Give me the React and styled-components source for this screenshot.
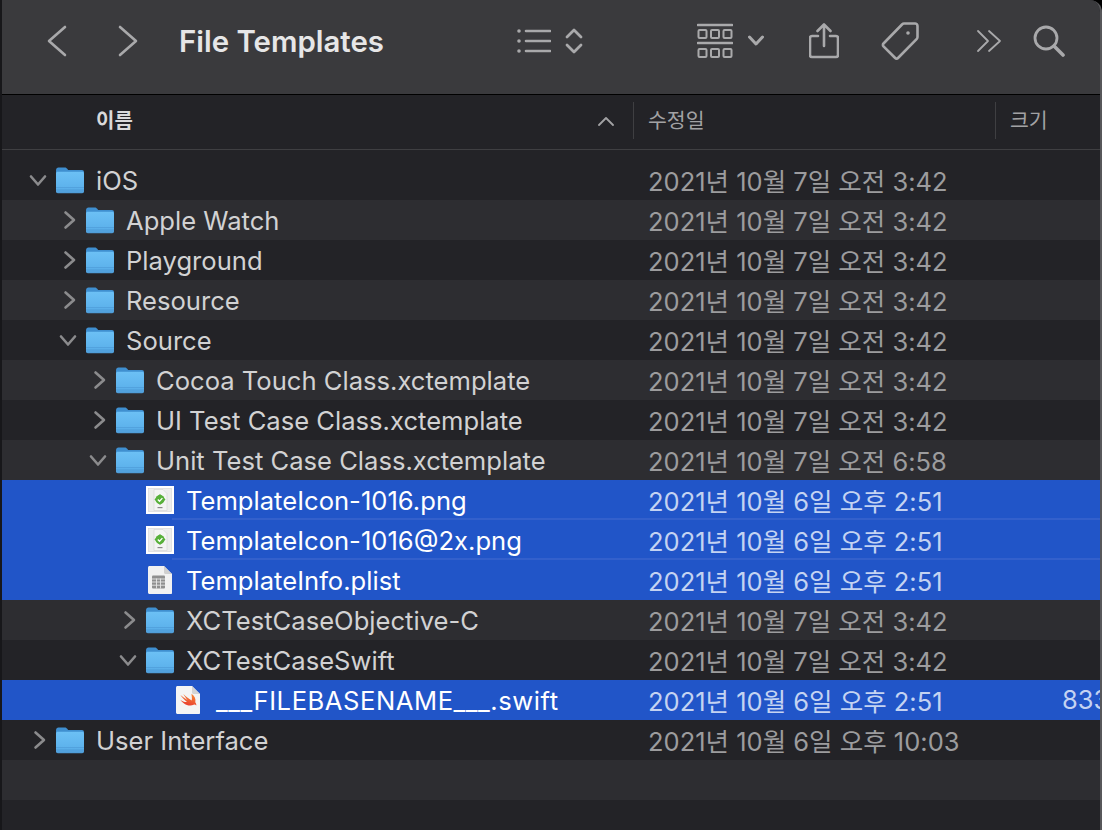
import React from 'react';
import styled, { createGlobalStyle } from 'styled-components';

const SANS = `Inter, "Noto Sans CJK KR", sans-serif`;

const GlobalStyle = createGlobalStyle`
  html, body {
    margin: 0;
    padding: 0;
    background: #000;
    overflow: hidden;
  }
`;

const Window = styled.div`
  width: 1102px;
  height: 830px;
  box-sizing: border-box;
  display: flex;
  flex-direction: column;
  overflow: hidden;
  background: #232327;
  border-left: 2px solid #17171a;
  border-right: 2px solid #57575a;
  border-top-right-radius: 12px;
  font-family: ${SANS};
`;

const Toolbar = styled.header`
  height: 95px;
  flex: none;
  box-sizing: border-box;
  display: flex;
  align-items: center;
  padding: 0 0 12px 45px;
  background: #3a3a3d;
  border-bottom: 1px solid #000;
`;

const ToolIcon = styled.svg`
  flex: none;
  margin-left: ${(p) => p.$left || 0}px;
  fill: none;
  stroke: #a9a9ab;
  stroke-width: 2.6;
  stroke-linecap: round;
  stroke-linejoin: round;
`;

const Title = styled.h1`
  margin: 0 0 0 41px;
  width: 204px;
  flex: none;
  font-size: 29.4px;
  font-weight: 600;
  color: #e6e6e7;
  white-space: nowrap;
`;

const ColumnHeader = styled.div`
  height: 55px;
  flex: none;
  box-sizing: border-box;
  padding-top: 7px;
  display: grid;
  grid-template-columns: 631px 362px 1fr;
  align-items: start;
  background: #232327;
  border-bottom: 1px solid #3f3f42;
`;

const HeaderCell = styled.div`
  height: 37px;
  display: flex;
  align-items: center;
  justify-content: space-between;
  box-sizing: border-box;
  padding: 0 19px 3px ${(p) => p.$left}px;
  border-left: ${(p) => (p.$divider ? '1px solid #3f3f42' : 'none')};
  font-size: ${(p) => (p.$active ? 20 : 20.5)}px;
  font-weight: ${(p) => (p.$active ? 600 : 400)};
  color: ${(p) => (p.$active ? '#d9d9da' : '#a2a2a4')};
`;

const SortCaret = styled.svg`
  margin-top: 3px;
  fill: none;
  stroke: #a2a2a4;
  stroke-width: 1.8;
  stroke-linecap: round;
  stroke-linejoin: round;
`;

const List = styled.div`
  flex: 1;
  padding-top: 10px;
  overflow: hidden;
`;

const Row = styled.div`
  position: relative;
  height: 40px;
  display: grid;
  grid-template-columns: 631px 362px 1fr;
  align-items: center;
  white-space: nowrap;
  overflow: hidden;
  background: ${(p) => (p.$selected ? '#2155c8' : p.$odd ? '#2d2d31' : '#232327')};

  &::after {
    content: '';
    display: ${(p) => (p.$line ? 'block' : 'none')};
    position: absolute;
    left: 170px;
    right: 0;
    bottom: 0;
    height: 2px;
    background: #3360cc;
  }
`;

const NameCell = styled.div`
  display: flex;
  align-items: center;
  padding-left: ${(p) => 26 + p.$level * 30}px;
  font-size: 25.6px;
  color: ${(p) => (p.$selected ? '#ffffff' : '#d2d2d3')};
`;

const Disclosure = styled.svg`
  width: 20px;
  height: 20px;
  flex: none;
  margin-right: 8px;
  fill: none;
  stroke: #8b8b8d;
  stroke-width: 2.6;
  stroke-linecap: round;
  stroke-linejoin: round;
`;

const FileName = styled.span`
  margin-left: 12px;
  letter-spacing: ${(p) => (p.$wide ? '0.55px' : 'normal')};
`;

const DateCell = styled.div`
  padding: 0 0 2px 15px;
  font-size: 25.5px;
  color: ${(p) => (p.$selected ? '#c4d3f2' : '#9c9c9e')};
`;

const SizeCell = styled.div`
  padding: 0 0 2px 67px;
  font-size: 25.5px;
  color: #c4d3f2;
`;

function Chevron({ open }) {
  return (
    <Disclosure viewBox="0 0 20 20">
      {open ? <path d="M3 6.500l7 8 7-8" /> : <path d="M7.500 2.500l8.500 7.500-8.500 7.500" />}
    </Disclosure>
  );
}

function FolderIcon() {
  return (
    <svg width="28" height="28" viewBox="0 0 28 28" style={{ flex: 'none' }}>
      <defs>
        <linearGradient id="folderBody" x1="0" y1="0" x2="0" y2="1">
          <stop offset="0" stopColor="#6cc0f5" />
          <stop offset="0.75" stopColor="#5db2ec" />
          <stop offset="1" stopColor="#4d9ad6" />
        </linearGradient>
      </defs>
      <path d="M0 4.500C0 2.800 1 1.500 2.500 1.500h6.300c1 0 1.600.4 2.200 1.100L12.200 4H26c1.200 0 2 .8 2 2v2H0z" fill="#3f8fd0" />
      <path d="M0 7.500C0 6.400.8 5.800 2 5.800h24c1.200 0 2 .6 2 1.700V25.500c0 1-.8 1.700-1.800 1.700H1.800C.8 27.200 0 26.500 0 25.500z" fill="url(#folderBody)" />
      <path d="M0 21.500h28M0 24h28" stroke="#4a97d4" strokeWidth="0.8" opacity="0.7" />
    </svg>
  );
}

function ThumbIcon() {
  return (
    <svg width="28" height="28" viewBox="0 0 28 28" style={{ flex: 'none' }}>
      <rect width="28" height="28" fill="#fff" />
      <rect x="2.500" y="2.500" width="23" height="23" fill="#ededed" stroke="#d6d6d6" strokeWidth="0.6" />
      <path d="M8 3.500h9l4 4v17H8z" fill="#f4f4f4" stroke="#d4d4d4" strokeWidth="0.6" />
      <path d="M14 8l5.500 5.500-5.500 5.500-5.500-5.500z" fill="#4fae35" />
      <circle cx="14" cy="13.500" r="4.500" fill="#58b03a" />
      <path d="M11.800 13.500l1.700 1.700 2.900-3.100" fill="none" stroke="#fff" strokeWidth="1.300" />
      <rect x="11.500" y="21" width="5" height="1.200" fill="#8a8a8a" />
    </svg>
  );
}

function PlistIcon() {
  return (
    <svg width="28" height="28" viewBox="0 0 28 28" style={{ flex: 'none' }}>
      <path d="M2 1.500C2 .7 2.700 0 3.500 0H18l8 8v19c0 .6-.5 1-1 1H3.500C2.700 28 2 27.300 2 26.500z" fill="#f1f1f1" />
      <path d="M18 0l8 8h-6.500C18.700 8 18 7.300 18 6.500z" fill="#cfcfcf" />
      <rect x="6" y="9.500" width="13" height="13" rx="1" fill="#8f8f8f" />
      <path d="M6 13h13M6 16h13M6 19.200h13M10.500 12.500v10M14.500 12.500v10" stroke="#e6e6e6" strokeWidth="0.9" />
    </svg>
  );
}

function SwiftIcon() {
  return (
    <svg width="28" height="28" viewBox="0 0 28 28" style={{ flex: 'none' }}>
      <defs>
        <linearGradient id="swiftBird" x1="0.7" y1="0" x2="0.3" y2="1">
          <stop offset="0" stopColor="#f88a36" />
          <stop offset="1" stopColor="#e8392f" />
        </linearGradient>
      </defs>
      <path d="M0 1.500C0 .7 .7 0 1.500 0H16l8 8v19c0 .6-.5 1-1 1H1.500C.7 28 0 27.300 0 26.500z" fill="#f4f4f4" />
      <path d="M16 0l8 8h-6.500C16.700 8 16 7.300 16 6.500z" fill="#d4d4d4" />
      <path d="M16.500 8.500c2.700 2 4 4.500 3.300 7.300.9 1.200 1.100 2.400.8 3-.5-.8-1.400-1.100-2.200-.7-2.300 1.100-5.800.9-8.900-1.600-1.100-.9-2-1.900-2.700-2.900 1.700 1.200 3.800 2.200 5.800 2-2.400-1.700-4.400-3.900-5.700-6 2 1.800 4.200 3.300 6.400 4.500-1.600-1.700-3-3.700-3.900-5.400 2.300 2.300 5.300 4.600 7.300 5.700.5-1.900-.1-4.100-.2-5.900z" fill="url(#swiftBird)" transform="translate(-3.500 -2) scale(1.150)" />
    </svg>
  );
}

const D1 = '2021년 10월 7일 오전 3:42';
const D2 = '2021년 10월 6일 오후 2:51';

const rows = [
  { name: 'iOS', level: 0, kind: 'open', date: D1 },
  { name: 'Apple Watch', level: 1, kind: 'closed', date: D1 },
  { name: 'Playground', level: 1, kind: 'closed', date: D1 },
  { name: 'Resource', level: 1, kind: 'closed', date: D1 },
  { name: 'Source', level: 1, kind: 'open', date: D1 },
  { name: 'Cocoa Touch Class.xctemplate', level: 2, kind: 'closed', date: D1 },
  { name: 'UI Test Case Class.xctemplate', level: 2, kind: 'closed', date: D1 },
  { name: 'Unit Test Case Class.xctemplate', level: 2, kind: 'open', date: '2021년 10월 7일 오전 6:58' },
  { name: 'TemplateIcon-1016.png', level: 3, kind: 'thumb', date: D2, selected: true, line: true },
  { name: 'TemplateIcon-1016@2x.png', level: 3, kind: 'thumb', date: D2, selected: true, line: true },
  { name: 'TemplateInfo.plist', level: 3, kind: 'plist', date: D2, selected: true },
  { name: 'XCTestCaseObjective-C', level: 3, kind: 'closed', date: D1 },
  { name: 'XCTestCaseSwift', level: 3, kind: 'open', date: D1 },
  { name: '___FILEBASENAME___.swift', level: 4, kind: 'swift', date: D2, size: '833', selected: true, wide: true },
  { name: 'User Interface', level: 0, kind: 'closed', date: '2021년 10월 6일 오후 10:03' },
  {},
  {},
];

function RowIcon({ kind }) {
  if (kind === 'thumb') return <ThumbIcon />;
  if (kind === 'plist') return <PlistIcon />;
  if (kind === 'swift') return <SwiftIcon />;
  return <FolderIcon />;
}

export default function App() {
  return (
    <>
      <GlobalStyle />
      <Window>
        <Toolbar>
          <ToolIcon width="20" height="32" viewBox="0 0 20 32">
            <path d="M18 2L2 16l16 14" />
          </ToolIcon>
          <ToolIcon $left={51} width="20" height="32" viewBox="0 0 20 32">
            <path d="M2 2l16 14L2 30" />
          </ToolIcon>
          <Title>File Templates</Title>
          <ToolIcon $left={134} width="34" height="26" viewBox="0 0 34 26">
            <circle cx="2" cy="3" r="1.800" fill="#a9a9ab" stroke="none" />
            <circle cx="2" cy="13" r="1.800" fill="#a9a9ab" stroke="none" />
            <circle cx="2" cy="23" r="1.800" fill="#a9a9ab" stroke="none" />
            <path d="M9 3h24M9 13h24M9 23h24" />
          </ToolIcon>
          <ToolIcon $left={14} width="18" height="28" viewBox="0 0 18 28">
            <path d="M2 10l7-7 7 7M2 18l7 7 7-7" strokeWidth="2.800" />
          </ToolIcon>
          <ToolIcon $left={114} width="36" height="36" viewBox="0 0 36 36" strokeLinecap="butt">
            <path d="M1 2h34M1 20h34" />
            <rect x="1.500" y="7" width="8" height="8" rx="1" strokeWidth="2" />
            <rect x="14" y="7" width="8" height="8" rx="1" strokeWidth="2" />
            <rect x="26.500" y="7" width="8" height="8" rx="1" strokeWidth="2" />
            <rect x="1.500" y="26" width="8" height="8" rx="1" strokeWidth="2" />
            <rect x="14" y="26" width="8" height="8" rx="1" strokeWidth="2" />
            <rect x="26.500" y="26" width="8" height="8" rx="1" strokeWidth="2" />
          </ToolIcon>
          <ToolIcon $left={15} width="16" height="12" viewBox="0 0 16 12">
            <path d="M1.500 2l6.500 7 6.500-7" strokeWidth="3" />
          </ToolIcon>
          <ToolIcon $left={45} width="30" height="36" viewBox="0 0 30 36">
            <path d="M9 13H3a2 2 0 0 0-2 2v17a2 2 0 0 0 2 2h24a2 2 0 0 0 2-2V15a2 2 0 0 0-2-2h-6M15 1.500V23M8.500 8L15 1.500 21.500 8" />
          </ToolIcon>
          <ToolIcon $left={42} width="38" height="38" viewBox="0 0 38 38">
            <path d="M2.500 21.500L21 2.500c.6-.6 1.300-1 2-1h11c1.300 0 2.500 1.200 2.500 2.500v11c0 .8-.3 1.500-.9 2.100L17 36c-.8.800-2 .800-2.800 0L2.500 24.300c-.8-.8-.8-2 0-2.800z" />
            <circle cx="27" cy="11" r="1.800" fill="#a9a9ab" stroke="none" />
          </ToolIcon>
          <ToolIcon $left={57} width="26" height="24" viewBox="0 0 26 24">
            <path d="M2 2l10 10L2 22M13 2l11 10-11 10" strokeWidth="1.800" />
          </ToolIcon>
          <ToolIcon $left={31} width="32" height="32" viewBox="0 0 32 32">
            <circle cx="13" cy="13" r="11" strokeWidth="2.800" />
            <path d="M21 21l9 9" strokeWidth="3.600" />
          </ToolIcon>
        </Toolbar>

        <ColumnHeader>
          <HeaderCell $left={94} $active>
            이름
            <SortCaret width="16" height="10" viewBox="0 0 16 10">
              <path d="M1 9l7-7 7 7" />
            </SortCaret>
          </HeaderCell>
          <HeaderCell $left={14} $divider>수정일</HeaderCell>
          <HeaderCell $left={14} $divider>크기</HeaderCell>
        </ColumnHeader>

        <List>
          {rows.map((row, i) => (
            <Row key={i} $odd={i % 2 === 1} $selected={row.selected} $line={row.line}>
              {row.name ? (
                <>
                  <NameCell $level={row.level} $selected={row.selected}>
                    {row.kind === 'open' || row.kind === 'closed' ? (
                      <Chevron open={row.kind === 'open'} />
                    ) : (
                      <Disclosure as="span" />
                    )}
                    <RowIcon kind={row.kind} />
                    <FileName $wide={row.wide}>{row.name}</FileName>
                  </NameCell>
                  <DateCell $selected={row.selected}>{row.date}</DateCell>
                  {row.size ? <SizeCell>{row.size}</SizeCell> : <div />}
                </>
              ) : null}
            </Row>
          ))}
        </List>
      </Window>
    </>
  );
}
